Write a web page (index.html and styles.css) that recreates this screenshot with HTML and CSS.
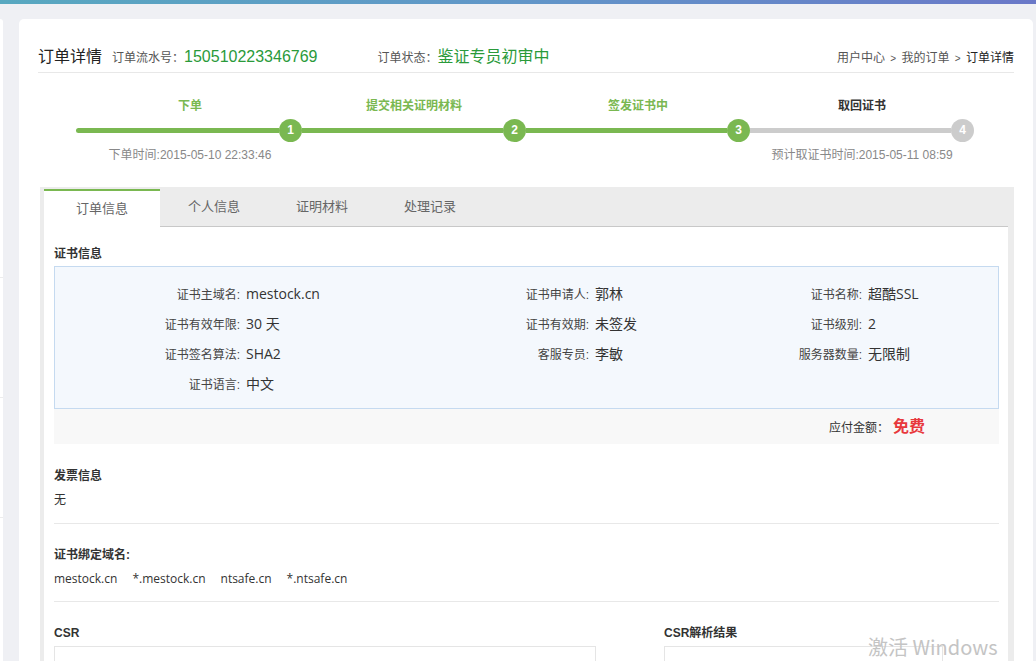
FILE: index.html
```html
<!DOCTYPE html>
<html>
<head>
    <meta charset="utf-8">
    <title>订单详情</title>
    <link rel="stylesheet" href="styles.css">
</head>
<body>
<div class="topbar"></div>
<div class="page">
    <div class="sidebar">
        <div class="side-item"></div>
        <div class="side-item"></div>
        <div class="side-item"></div>
    </div>
    <div class="card">
        <div class="head">
            <span class="head-title">订单详情</span>
            <span class="head-label">订单流水号：</span><span class="head-green">150510223346769</span>
            <span class="head-label state">订单状态：</span><span class="head-green">鉴证专员初审中</span>
            <div class="crumbs">用户中心 <span class="sep">&gt;</span> 我的订单 <span class="sep">&gt;</span> <b>订单详情</b></div>
        </div>

        <div class="steps">
            <div class="step done">
                <div class="step-name">下单</div>
                <div class="track"><span class="bar first"></span><span class="dot">1</span></div>
                <div class="step-time">下单时间:2015-05-10 22:33:46</div>
            </div>
            <div class="step done">
                <div class="step-name">提交相关证明材料</div>
                <div class="track"><span class="bar"></span><span class="dot">2</span></div>
                <div class="step-time"></div>
            </div>
            <div class="step done">
                <div class="step-name">签发证书中</div>
                <div class="track"><span class="bar"></span><span class="dot">3</span></div>
                <div class="step-time"></div>
            </div>
            <div class="step todo">
                <div class="step-name">取回证书</div>
                <div class="track"><span class="bar"></span><span class="dot">4</span></div>
                <div class="step-time">预计取证书时间:2015-05-11 08:59</div>
            </div>
        </div>

        <div class="tabs">
            <div class="tab-bar">
                <div class="tab active">订单信息</div>
                <div class="tab">个人信息</div>
                <div class="tab">证明材料</div>
                <div class="tab">处理记录</div>
                <div class="tab-rest"></div>
            </div>
            <div class="tab-body">
                <div class="sec-title">证书信息</div>
                <div class="info">
                    <div class="lbl">证书主域名:</div><div class="val">mestock.cn</div>
                    <div class="lbl">证书申请人:</div><div class="val">郭林</div>
                    <div class="lbl">证书名称:</div><div class="val">超酷SSL</div>

                    <div class="lbl">证书有效年限:</div><div class="val">30 天</div>
                    <div class="lbl">证书有效期:</div><div class="val">未签发</div>
                    <div class="lbl">证书级别:</div><div class="val">2</div>

                    <div class="lbl">证书签名算法:</div><div class="val">SHA2</div>
                    <div class="lbl">客服专员:</div><div class="val">李敏</div>
                    <div class="lbl">服务器数量:</div><div class="val">无限制</div>

                    <div class="lbl">证书语言:</div><div class="val">中文</div>
                </div>
                <div class="pay">应付金额：<span class="free">免费</span></div>

                <div class="block">
                    <div class="sec-title">发票信息</div>
                    <div class="plain">无</div>
                </div>

                <div class="block">
                    <div class="sec-title">证书绑定域名:</div>
                    <div class="domains">
                        <span>mestock.cn</span>
                        <span>*.mestock.cn</span>
                        <span>ntsafe.cn</span>
                        <span>*.ntsafe.cn</span>
                    </div>
                </div>

                <div class="csr">
                    <div class="csr-left">
                        <div class="sec-title">CSR</div>
                        <div class="csr-box"></div>
                    </div>
                    <div class="csr-right">
                        <div class="sec-title">CSR解析结果</div>
                        <div class="csr-box"></div>
                    </div>
                </div>
            </div>
        </div>
    </div>
</div>
<div class="watermark">激活 Windows</div>
</body>
</html>
```

FILE: styles.css
```css
* {
    padding: 0;
    margin: 0;
    box-sizing: border-box;
}

html, body {
    height: 100%;
    overflow: hidden;
}

body {
    background-color: #eff0f4;
    font-family: "Liberation Sans", "Noto Sans CJK SC", sans-serif;
    font-size: 12px;
    color: #333;
}

.topbar {
    height: 4px;
    background: linear-gradient(to right, #58a8c0, #6196c8 50%, #6a78c8);
}

.page {
    display: flex;
    padding-top: 15px;
    height: calc(100% - 4px);
}

.sidebar {
    width: 3px;
    margin-right: 16px;
    background-color: #fff;
    border-top-right-radius: 4px;
    padding-top: 258px;
}

.side-item {
    height: 120px;
    border-top: 1px solid #ececec;
}

.card {
    width: 1014px;
    background-color: #fff;
    border-radius: 5px 5px 0 0;
    padding: 0 19px;
}

/* header */
.head {
    display: flex;
    align-items: baseline;
    padding-top: 24px;
    height: 54px;
    border-bottom: 1px solid #e8e8e8;
}

.head-title {
    font-size: 16px;
    color: #222;
    margin-right: 10px;
}

.head-label {
    font-size: 12px;
    color: #555;
}

.head-label.state {
    margin-left: 60px;
}

.head-green {
    font-size: 16px;
    color: #2a9a3a;
}

.crumbs {
    margin-left: auto;
    font-size: 12px;
    color: #555;
}

.crumbs .sep {
    font-size: 10px;
    margin: 0 2px;
}

.crumbs b {
    font-weight: normal;
    color: #222;
}

/* steps */
.steps {
    display: flex;
    width: 896px;
    margin: 23px auto 0;
}

.step {
    width: 224px;
    text-align: center;
}

.step-name {
    height: 20px;
    line-height: 20px;
    font-weight: bold;
    color: #7ab851;
}

.step.todo .step-name {
    color: #333;
}

.track {
    display: flex;
    align-items: center;
    height: 23px;
    margin-top: 3px;
}

.bar {
    flex: 1;
    height: 5px;
    background-color: #7ab851;
}

.bar.first {
    margin-left: -2px;
    border-radius: 3px 0 0 3px;
}

.dot {
    width: 23px;
    height: 23px;
    border-radius: 50%;
    background-color: #7ab851;
    color: #fff;
    font-size: 12px;
    font-weight: bold;
    line-height: 23px;
}

.step.todo .bar,
.step.todo .dot {
    background-color: #cccccc;
}

.step-time {
    height: 20px;
    line-height: 20px;
    margin-top: 3px;
    color: #888;
}

/* tabs */
.tabs {
    margin-top: 22px;
    margin-left: 2px;
    background-color: #ececec;
    padding: 2px 6px 0 4px;
    height: 500px;
}

.tab-bar {
    display: flex;
    height: 38px;
}

.tab {
    width: 108px;
    text-align: center;
    font-size: 13px;
    color: #666;
    line-height: 36px;
    border-bottom: 1px solid #c8c8c8;
}

.tab.active {
    width: 116px;
    background-color: #fff;
    border-top: 2px solid #7ab851;
    border-bottom: none;
    line-height: 36px;
}

.tab-rest {
    flex: 1;
    border-bottom: 1px solid #c8c8c8;
}

.tab-body {
    background-color: #fff;
    padding: 0 9px 0 10px;
    height: 100%;
}

.sec-title {
    font-weight: bold;
    color: #333;
    line-height: 16px;
}

.tab-body > .sec-title {
    padding-top: 19px;
    margin-bottom: 4px;
}

.info {
    display: grid;
    grid-template-columns: 191px 158px 191px 82px 191px 1fr;
    grid-auto-rows: 30px;
    align-items: center;
    padding: 11px 0 10px;
    background-color: #f4f8fd;
    border: 1px solid #c5daf0;
}

.lbl {
    text-align: right;
    padding-right: 6px;
    color: #444;
}

.val {
    font-family: "Open Sans", "Noto Sans CJK SC", sans-serif;
    font-size: 14px;
    color: #333;
}

.pay {
    height: 35px;
    line-height: 35px;
    text-align: right;
    padding-right: 74px;
    background-color: #f8f8f8;
    color: #333;
}

.free {
    margin-left: 4px;
    font-size: 16px;
    font-weight: bold;
    color: #e8383d;
}

.block {
    padding: 24px 0 15px;
    border-bottom: 1px solid #e8e8e8;
}

.block + .block {
    padding: 23px 0 14px;
}

.plain {
    margin-top: 8px;
    line-height: 16px;
}

.domains {
    display: flex;
    gap: 15px;
    margin-top: 8px;
    line-height: 16px;
    font-family: "Open Sans", sans-serif;
}

.csr {
    display: flex;
    padding-top: 23px;
}

.csr-left {
    width: 542px;
    margin-right: 68px;
}

.csr-right {
    width: 279px;
}

.csr-box {
    height: 120px;
    margin-top: 5px;
    border: 1px solid #e5e5e5;
}

.watermark {
    position: absolute;
    left: 868px;
    top: 632px;
    font-family: "Noto Sans CJK SC", sans-serif;
    font-size: 20px;
    color: #c4c4c4;
}
```
